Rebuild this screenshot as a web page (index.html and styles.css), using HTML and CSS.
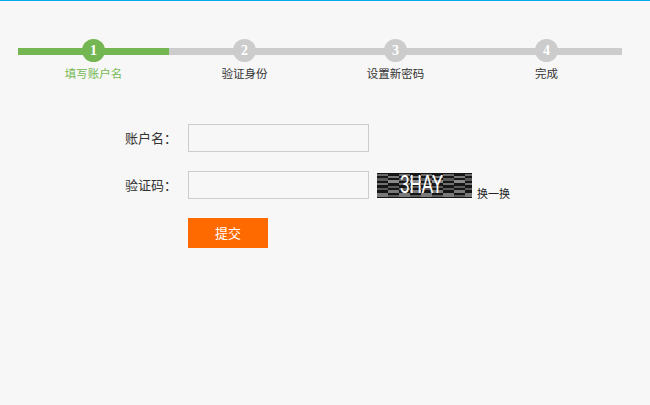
FILE: index.html
```html
<!DOCTYPE html>
<html lang="zh-CN">
<head>
  <meta charset="UTF-8">
  <title>找回密码</title>
  <link rel="stylesheet" href="styles.css">
</head>
<body>
  <div class="steps">
    <div class="step active"><span class="num">1</span><span class="name">填写账户名</span></div>
    <div class="step"><span class="num">2</span><span class="name">验证身份</span></div>
    <div class="step"><span class="num">3</span><span class="name">设置新密码</span></div>
    <div class="step"><span class="num">4</span><span class="name">完成</span></div>
  </div>

  <form class="form">
    <div class="row">
      <label for="account">账户名：</label>
      <input type="text" id="account">
    </div>
    <div class="row">
      <label for="code">验证码：</label>
      <input type="text" id="code">
      <div class="captcha">
        <svg width="95" height="25" viewBox="0 0 95 25">
          <defs>
            <pattern id="noise" width="22" height="25" patternUnits="userSpaceOnUse">
              <rect width="22" height="25" fill="#161616"/>
              <rect x="0" y="1" width="11" height="2" fill="#6a6a6a"/>
              <rect x="0" y="5" width="11" height="3" fill="#5a5a5a"/>
              <rect x="0" y="10" width="11" height="2" fill="#707070"/>
              <rect x="0" y="15" width="11" height="2" fill="#5a5a5a"/>
              <rect x="0" y="20" width="11" height="4" fill="#7a7a7a"/>
              <rect x="11" y="3" width="11" height="2" fill="#7a7a7a"/>
              <rect x="11" y="7" width="11" height="3" fill="#8a8a8a"/>
              <rect x="11" y="13" width="11" height="2" fill="#5a5a5a"/>
              <rect x="11" y="17" width="11" height="3" fill="#7a7a7a"/>
              <rect x="11" y="22" width="11" height="2" fill="#5a5a5a"/>
            </pattern>
          </defs>
          <rect width="95" height="25" fill="url(#noise)"/>
        </svg>
        <span class="captcha-text">3HAY</span>
      </div>
      <a class="change">换一换</a>
    </div>
    <button type="button" class="submit">提交</button>
  </form>
</body>
</html>
```

FILE: styles.css
```css
html, body {
  height: 100%;
}
body {
  margin: 0;
  box-sizing: border-box;
  overflow: hidden;
  border-top: 1px solid #00a8ec;
  background-color: #f7f7f7;
  font-family: "Liberation Sans", "Noto Sans CJK SC", sans-serif;
  font-size: 11.5px;
  color: #333;
}
.steps {
  display: flex;
  width: 604px;
  margin: 37px 0 0 18px;
}
.step {
  position: relative;
  width: 151px;
  padding-top: 14px;
  display: flex;
  flex-direction: column;
  align-items: center;
  background: linear-gradient(#ccc, #ccc) 0 10px / 100% 7px no-repeat;
}
.step.active {
  background-image: linear-gradient(#74b752, #74b752);
}
.num {
  position: absolute;
  top: 0.5px;
  left: 64px;
  width: 23px;
  height: 23px;
  border-radius: 50%;
  background-color: #ccc;
  color: #fff;
  font-family: "Liberation Serif", serif;
  font-size: 14px;
  font-weight: bold;
  line-height: 23px;
  text-align: center;
}
.active .num {
  background-color: #74b752;
}
.name {
  margin-top: 14px;
  line-height: 17px;
}
.active .name {
  color: #74b752;
}
.form {
  margin-top: 41px;
  padding-left: 125px;
}
.row {
  display: flex;
  align-items: center;
  height: 28px;
  margin-bottom: 19px;
}
label {
  width: 63px;
  margin-top: -2px;
  font-size: 13px;
}
input {
  width: 181px;
  height: 28px;
  box-sizing: border-box;
  border: 1px solid #ccc;
  background-color: #f7f7f7;
  padding: 0 5px;
}
.captcha {
  position: relative;
  width: 95px;
  height: 25px;
  margin-left: 8px;
}
.captcha svg {
  display: block;
}
.captcha-text {
  position: absolute;
  top: -1px;
  left: 0;
  width: 95px;
  color: #fff;
  font-size: 25px;
  line-height: 25px;
  text-align: center;
  transform: translateX(-3px) scaleX(0.68);
}
.change {
  align-self: flex-end;
  margin-left: 5px;
  margin-bottom: -3px;
  font-size: 11px;
  line-height: 16px;
  color: #222;
}
.submit {
  display: block;
  width: 80px;
  height: 30px;
  margin-left: 63px;
  padding: 0 0 2px;
  border: none;
  background-color: #ff6a00;
  color: #fff;
  font-family: inherit;
  font-size: 13px;
}
```
